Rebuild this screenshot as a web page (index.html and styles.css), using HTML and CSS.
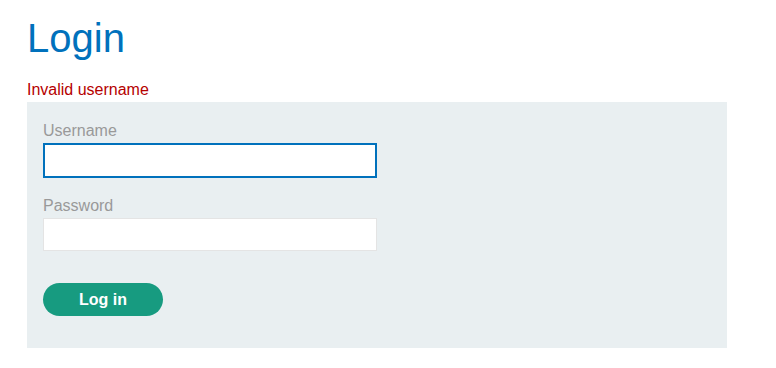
FILE: index.html
```html
<!DOCTYPE html>
<html lang="en">
<head>
    <meta charset="UTF-8">
    <meta name="viewport" content="width=device-width, initial-scale=1.0">
    <title>Login</title>
    <link rel="stylesheet" href="styles.css">
</head>
<body>
    <div class="container">
        <h1>Login</h1>
        <p class="is-warning">Invalid username</p>
        <form class="login-form">
            <label for="username">Username</label>
            <input type="text" id="username" class="is-focused">
            <label for="password">Password</label>
            <input type="password" id="password">
            <button type="button" class="button">Log in</button>
        </form>
    </div>
</body>
</html>
```

FILE: styles.css
```css
:root {
    --color-blue: #0071bc;
    --color-error: #b50000;
    --color-panel: #e9eff1;
    --color-label: #999999;
    --color-button: #179b80;
}

* {
    margin: 0;
    padding: 0;
    box-sizing: border-box;
    font-family: "Liberation Sans", Arial, Helvetica, sans-serif;
}

body {
    background: #fff;
}

.container {
    width: 700px;
    margin-left: 27px;
    padding-top: 14px;
}

h1 {
    font-size: 40px;
    font-weight: normal;
    line-height: 48px;
    color: var(--color-blue);
}

.is-warning {
    margin-top: 18px;
    padding-bottom: 2px;
    font-size: 16px;
    line-height: 20px;
    color: var(--color-error);
}

.login-form {
    display: flex;
    flex-direction: column;
    align-items: flex-start;
    background: var(--color-panel);
    padding: 20px 16px 32px;
}

.login-form label {
    font-size: 16px;
    line-height: 18px;
    color: var(--color-label);
    margin-bottom: 3px;
}

.login-form input {
    width: 334px;
    height: 33px;
    border: 1px solid #e4e4e4;
    background: #fff;
    margin-bottom: 19px;
    outline: none;
}

.login-form input.is-focused {
    height: 35px;
    border: 2px solid var(--color-blue);
}

.button {
    margin-top: 13px;
    width: 120px;
    height: 33px;
    border: none;
    border-radius: 17px;
    background: var(--color-button);
    color: #fff;
    font-size: 16px;
    font-weight: bold;
    cursor: pointer;
}
```
